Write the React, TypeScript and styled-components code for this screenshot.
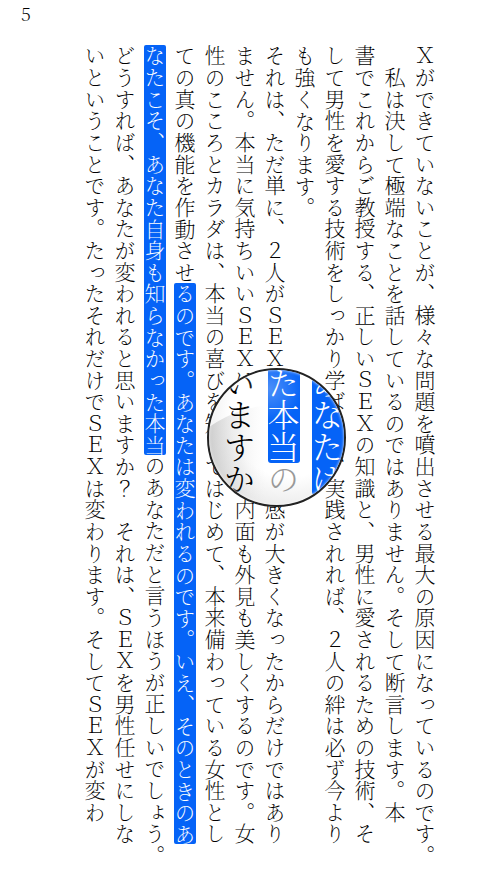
import React from "react";
import styled, { createGlobalStyle } from "styled-components";

const blue = "#0563f7";
const bookFont = `"Noto Serif CJK JP", "Noto Sans CJK JP", serif`;

const GlobalStyle = createGlobalStyle`
  * { box-sizing: border-box; }
  body { margin: 0; background: #fff; color: #000; }
`;

const Page = styled.main`
  position: relative;
  min-height: 100vh;
  overflow: hidden;
`;

const Header = styled.header`
  height: 45px;
  padding: 4px 21px;
  font-family: ${bookFont};
  font-size: 18px;
  font-weight: 200;
  line-height: 18px;
`;

const Text = styled.article`
  writing-mode: vertical-rl;
  width: fit-content;
  height: calc(100vh - 90px);
  margin-left: auto;
  margin-right: 60px;
  font-family: ${bookFont};
  font-size: 21px;
  font-weight: 200;
`;

const Column = styled.p<{ $cells: number }>`
  display: flex;
  align-items: center;
  margin: 0;
  inline-size: calc(100% * ${(p) => p.$cells} / 37);
  block-size: 30px;
`;

const Run = styled.span<{ $cells: number }>`
  flex: ${(p) => p.$cells} 1 0;
  min-inline-size: 0;
  line-height: 22px;
  text-align: justify;
  text-align-last: justify;
  white-space: pre;
`;

const Selected = styled(Run).attrs({ as: "mark" })`
  border-radius: 2px;
  background: ${blue};
  color: #fff;
`;

const Lens = styled.aside`
  position: absolute;
  top: 368px;
  left: 207px;
  width: 139px;
  height: 139px;
  overflow: hidden;
  border: 2px solid #222;
  border-radius: 50%;
  background: radial-gradient(circle at 60% 35%, #fff 50%, #ececec 75%, #c4c4c4 100%);

  &::after {
    content: "";
    position: absolute;
    inset: 0;
    border-radius: 50%;
    background: radial-gradient(circle at 45% 14%, rgba(255, 255, 255, 0.28), transparent 24%);
    box-shadow: inset 0 0 3px rgba(255, 255, 255, 0.8);
  }
`;

const Glare = styled.svg`
  position: absolute;
  inset: 0;
  width: 100%;
  height: 100%;
`;

const LensText = styled.div`
  position: relative;
  display: flex;
  flex-direction: row-reverse;
  justify-content: center;
  gap: 12px;
  margin-top: -3px;
  padding-left: 14px;
  font-family: ${bookFont};
  font-size: 32px;
  font-weight: 300;
  line-height: 32px;
`;

const LensColumn = styled.span`
  writing-mode: vertical-rl;
  white-space: pre;
`;

const LensMark = styled.mark`
  display: inline-block;
  border-radius: 3px;
  background: ${blue};
  color: #fff;
`;

const Faded = styled.span`
  color: #999;
`;

type Part = { text: string; selected?: boolean };

const columns: Part[][] = [
  [{ text: "Xができていないことが、様々な問題を噴出させる最大の原因になっているのです。" }],
  [{ text: "　私は決して極端なことを話しているのではありません。そして断言します。本" }],
  [{ text: "書でこれからご教授する、正しいSEXの知識と、男性に愛されるための技術、そ" }],
  [{ text: "して男性を愛する技術をしっかり学ばれて、実践されれば、2人の絆は必ず今より" }],
  [{ text: "も強くなります。" }],
  [{ text: "それは、ただ単に、2人がSEXで得られる快感が大きくなったからだけではあり" }],
  [{ text: "ません。本当に気持ちいいSEXは、あなたの内面も外見も美しくするのです。女" }],
  [{ text: "性のこころとカラダは、本当の喜びを知ってはじめて、本来備わっている女性とし" }],
  [{ text: "ての真の機能を作動させ" }, { text: "るのです。あなたは変われるのです。いえ、そのときのあ", selected: true }],
  [{ text: "なたこそ、あなた自身も知らなかった本当", selected: true }, { text: "のあなただと言うほうが正しいでしょう。" }],
  [{ text: "どうすれば、あなたが変われると思いますか?　それは、SEXを男性任せにしな" }],
  [{ text: "いということです。たったそれだけでSEXは変わります。そしてSEXが変わ" }],
];

// Latin letters, digits and question marks stand upright in full-width cells.
const fullWidth = (text: string) =>
  text.replace(/[!-~]/g, (c) => String.fromCharCode(c.charCodeAt(0) + 0xfee0));

export default function App() {
  return (
    <>
      <GlobalStyle />
      <Page lang="ja">
        <Header>5</Header>
        <Text>
          {columns.map((parts, i) => (
            <Column key={i} $cells={parts.reduce((n, p) => n + p.text.length, 0)}>
              {parts.map((p) => {
                const Part = p.selected ? Selected : Run;
                return (
                  <Part key={p.text} $cells={p.text.length}>
                    {fullWidth(p.text)}
                  </Part>
                );
              })}
            </Column>
          ))}
        </Text>
        <Lens>
          <Glare viewBox="0 0 135 135" aria-hidden="true">
            <defs>
              <linearGradient id="glare" x1="0" y1="0" x2="1" y2="0">
                <stop offset="0" stopColor="#aaa" stopOpacity="0.5" />
                <stop offset="1" stopColor="#ddd" stopOpacity="0" />
              </linearGradient>
            </defs>
            <path d="M0 57 Q16 46 34 40 Q48 36 56 36 L56 135 L0 135Z" fill="url(#glare)" />
          </Glare>
          <LensText>
            <LensColumn><LensMark>あなたは</LensMark></LensColumn>
            <LensColumn><LensMark>た本当</LensMark><Faded>の</Faded></LensColumn>
            <LensColumn>いますか</LensColumn>
          </LensText>
        </Lens>
      </Page>
    </>
  );
}
